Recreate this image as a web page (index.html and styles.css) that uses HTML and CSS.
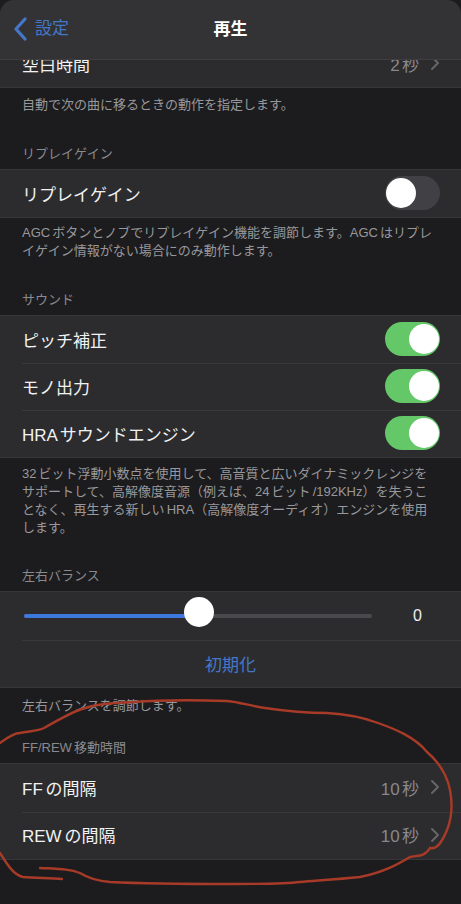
FILE: index.html
```html
<!DOCTYPE html>
<html lang="ja">
<head>
<meta charset="utf-8">
<title>再生</title>
<link rel="stylesheet" href="styles.css">
</head>
<body>
<div class="screen">
  <header class="nav">
    <a class="back">
      <svg class="back-icon" viewBox="0 0 14 24" width="14" height="24"><path d="M12 2 L3 12 L12 22" fill="none" stroke="currentColor" stroke-width="3.2" stroke-linecap="round" stroke-linejoin="round"/></svg>
      <span>設定</span>
    </a>
    <h1 class="title">再生</h1>
  </header>
  <main class="content">
    <section class="group group-clipped">
      <div class="row"><span class="label">空白時間</span><span class="value">2 秒</span><svg class="chev" viewBox="0 0 10 16" width="10" height="16"><path d="M2 2 L8 8 L2 14" fill="none" stroke="currentColor" stroke-width="2" stroke-linecap="round" stroke-linejoin="round"/></svg></div>
    </section>
    <p class="foot foot-auto">自動で次の曲に移るときの動作を指定します。</p>

    <h2 class="head">リプレイゲイン</h2>
    <section class="group">
      <div class="row"><span class="label">リプレイゲイン</span><span class="toggle"><span class="thumb"></span></span></div>
    </section>
    <p class="foot foot-agc">AGC ボタンとノブでリプレイゲイン機能を調節します。AGC はリプレイゲイン情報がない場合にのみ動作します。</p>

    <h2 class="head">サウンド</h2>
    <section class="group">
      <div class="row"><span class="label">ピッチ補正</span><span class="toggle on"><span class="thumb"></span></span></div>
      <div class="row"><span class="label">モノ出力</span><span class="toggle on"><span class="thumb"></span></span></div>
      <div class="row"><span class="label">HRA サウンドエンジン</span><span class="toggle on"><span class="thumb"></span></span></div>
    </section>
    <p class="foot">32 ビット浮動小数点を使用して、高音質と広いダイナミックレンジをサポートして、高解像度音源（例えば、24 ビット /192KHz）を失うことなく、再生する新しい HRA（高解像度オーディオ）エンジンを使用します。</p>

    <h2 class="head head-balance">左右バランス</h2>
    <section class="group">
      <div class="row slider-row">
        <div class="slider"><span class="fill"></span><span class="knob"></span></div>
        <span class="slider-value">0</span>
      </div>
      <div class="row reset-row"><span class="reset">初期化</span></div>
    </section>
    <p class="foot foot-balance">左右バランスを調節します。</p>

    <h2 class="head head-ff">FF/REW 移動時間</h2>
    <section class="group group-ff">
      <div class="row"><span class="label">FF の間隔</span><span class="value">10 秒</span><svg class="chev" viewBox="0 0 10 16" width="10" height="16"><path d="M2 2 L8 8 L2 14" fill="none" stroke="currentColor" stroke-width="2" stroke-linecap="round" stroke-linejoin="round"/></svg></div>
      <div class="row"><span class="label">REW の間隔</span><span class="value">10 秒</span><svg class="chev" viewBox="0 0 10 16" width="10" height="16"><path d="M2 2 L8 8 L2 14" fill="none" stroke="currentColor" stroke-width="2" stroke-linecap="round" stroke-linejoin="round"/></svg></div>
    </section>
  </main>
  <svg class="scribble" viewBox="0 0 461 904" width="461" height="904">
    <path d="M0 743 C8 737 14 733 20 733 C30 731 38 731 44 728 C58 720 72 712 82 709 C96 704 110 703 133 702 C160 700 200 700 227 701 C240 702 250 706 265 708 C285 711 305 713 327 713 C345 714 362 717 378 723 C395 729 415 737 427 752 C440 763 447 775 450 790 C453 806 451 820 447 830 C442 842 437 850 430 848 C424 858 416 855 410 857 C400 863 385 872 360 877 C340 879 325 880 300 882 C285 884 260 884 233 884 C190 884 150 884 110 882 C97 881 88 878 80 873 C70 869 60 869 40 868" fill="none" stroke="#a83a28" stroke-width="2.4" stroke-linecap="round"/>
    <path d="M62 879 C50 878 35 878 23 877 C14 875 8 866 0 853" fill="none" stroke="#a83a28" stroke-width="2.4" stroke-linecap="round"/>
  </svg>
</div>
</body>
</html>
```
FILE: styles.css
```css
* { box-sizing: border-box; }
html, body { margin: 0; padding: 0; background: #1c1c1e; }
body { font-family: "Liberation Sans", "Noto Sans CJK JP", sans-serif; color: #fff; }
.screen { position: relative; width: 461px; height: 904px; overflow: hidden; background: #1c1c1e; }
.nav { position: relative; z-index: 2; height: 60px; background: #333335; border-bottom: 1px solid #3e3e40; display: flex; align-items: center; justify-content: center; border-radius: 14px 14px 0 0; }
.back { position: absolute; left: 13px; top: 17px; display: flex; align-items: center; gap: 8px; color: #4577c8; font-size: 17px; line-height: 24px; }
.back-icon { display: block; }
.title { margin: 0; font-size: 17px; font-weight: 700; color: #fff; line-height: 1; }
.content { display: block; }
.group { background: #2c2c2e; border-top: 1px solid #363638; border-bottom: 1px solid #363638; }
.group-clipped { margin-top: -20px; border-top: 0; }
.row { height: 47px; display: flex; align-items: center; padding: 0 22px 1px; position: relative; }
.row + .row::before { content: ""; position: absolute; top: 0; left: 22px; right: 0; height: 1px; background: #39393b; }
.group-ff .row { height: 47.5px; }
.label { flex: 1; font-size: 17px; color: #f2f2f2; word-spacing: -2px; }
.value { font-size: 17px; color: #88888c; margin-right: 11px; word-spacing: -2.5px; }
.chev { color: #66666a; display: block; margin-right: -1px; }
.toggle { width: 55px; height: 34px; border-radius: 17px; background: #414145; position: relative; margin-right: -1px; }
.toggle.on { background: #64c868; }
.thumb { position: absolute; top: 2px; left: 1px; width: 30px; height: 30px; border-radius: 50%; background: #fff; }
.toggle.on .thumb { left: 24px; }
.foot { margin: 0; padding: 7px 24px 0 22px; font-size: 13px; line-height: 18px; color: #98989c; word-spacing: -1.5px; }
.foot-auto { padding-top: 8px; }
.foot-agc { padding-top: 6px; }
.foot-balance { padding-top: 9px; }
.head { margin: 31px 0 7px; padding: 0 22px; font-size: 13px; font-weight: 400; line-height: 17px; color: #8a8a8e; word-spacing: -1.5px; }
.head-balance { margin-top: 30px; }
.head-ff { margin-top: 24px; }
.row.slider-row { height: 48px; }
.slider { flex: none; width: 348px; height: 4px; margin-left: 2px; background: #4a4a4e; border-radius: 2px; position: relative; }
.fill { position: absolute; left: 0; top: 0; bottom: 0; width: 175px; background: #3f78dc; border-radius: 2px; }
.knob { position: absolute; left: 160px; top: -17px; width: 30px; height: 30px; border-radius: 50%; background: #fff; }
.slider-value { position: absolute; left: 413px; font-size: 16px; color: #eee; }
.reset-row { justify-content: center; }
.reset { font-size: 17px; color: #4577c8; }
.scribble { position: absolute; left: 0; top: 0; z-index: 3; pointer-events: none; }
```
